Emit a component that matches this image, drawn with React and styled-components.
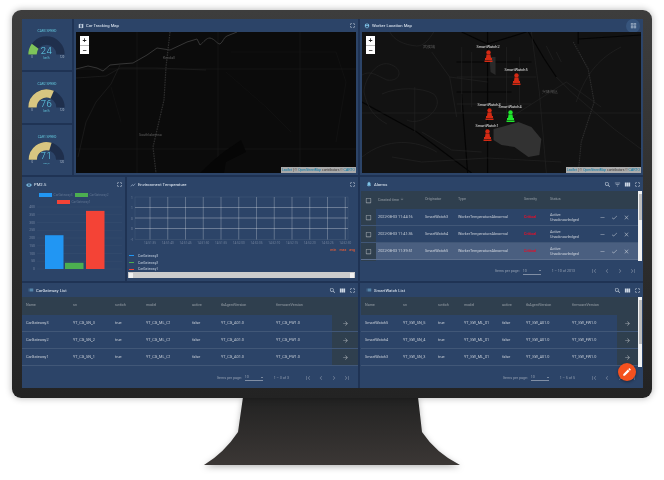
import React from "react";
import styled, { createGlobalStyle } from "styled-components";
import {
  MdMap, MdPersonPin, MdVisibility, MdShowChart, MdNotifications, MdList, MdSearch,
  MdFilterList, MdViewColumn, MdFullscreen, MdArrowForward, MdDone, MdClose, MdRemove,
  MdFirstPage, MdLastPage, MdChevronLeft, MdChevronRight, MdEdit, MdArrowDownward,
  MdCheckBoxOutlineBlank, MdGridView,
} from "react-icons/md";

const GlobalStyle = createGlobalStyle`
  html, body { margin: 0; background: #fff; overflow: hidden; }
  * { box-sizing: border-box; }
  body { font-family: Roboto, "Liberation Sans", sans-serif; }
`;

const Page = styled.div`
  width: 664px;
  height: 480px;
  padding: 10px 0 0 12px;
`;

const Monitor = styled.div`
  position: relative;
  z-index: 1;
  width: 640px;
  height: 388px;
  padding: 9px 9px 10px 10px;
  border-radius: 9px;
  background: linear-gradient(#3d3d3d, #232323);
  box-shadow: 0 0 7px rgba(0, 0, 0, 0.3);
`;

const Screen = styled.div`
  position: relative;
  display: grid;
  grid-template-rows: 156px 104px 105px;
  gap: 2px;
  width: 621px;
  height: 369px;
  background: #1f3354;
  filter: blur(0.4px);
`;

const Row = styled.div`
  display: grid;
  grid-template-columns: ${(p) => p.$cols};
  gap: 2px;
  min-height: 0;
`;

const GaugeColumn = styled.div`
  display: grid;
  grid-template-rows: 51px 51px 50px;
  gap: 2px;
`;

const Panel = styled.section`
  display: flex;
  flex-direction: column;
  min-width: 0;
  min-height: 0;
  background: #2c4468;
  overflow: hidden;
`;

const PanelHead = styled.header`
  display: flex;
  align-items: center;
  flex: none;
  height: ${(p) => p.$h || 14}px;
  padding: 0 2px 0 ${(p) => p.$pad ?? 4}px;
  color: #dfe6ef;
`;

const PanelTitle = styled.span`
  margin-left: 2px;
  flex: 1;
  font-size: 4.2px;
  font-weight: 500;
  color: #cdd7e4;
  white-space: nowrap;
`;

const HeadTools = styled.div`
  display: flex;
  align-items: center;
  gap: 3px;
  color: #cdd7e4;
`;

const MapPane = styled.div`
  position: relative;
  flex: 1;
  margin: 0 2px 2px;
  background: ${(p) => p.$bg};
  overflow: hidden;
`;

const MapArt = styled.svg`
  display: block;
  width: 100%;
  height: 100%;
`;

const ZoomBox = styled.div`
  position: absolute;
  left: 4px;
  top: 4px;
  width: 9px;
  height: 18px;
  display: grid;
  grid-template-rows: 1fr 1fr;
  background: #fff;
  font: 700 7px/9px "Liberation Sans", sans-serif;
  color: #222;
  text-align: center;
  span + span { border-top: 0.5px solid #bbb; }
`;

const Attribution = styled.div`
  position: absolute;
  right: 0;
  bottom: 0;
  height: 6px;
  padding: 0 1px;
  background: rgba(255, 255, 255, 0.65);
  font: 3.3px/6px "Liberation Sans", sans-serif;
  color: #333;
  white-space: nowrap;
  b { font-weight: 400; color: #0078a8; }
`;

const PlaceName = styled.span`
  position: absolute;
  left: ${(p) => p.$x}px;
  top: ${(p) => p.$y}px;
  font-size: 3.6px;
  color: #5d5d5d;
  white-space: nowrap;
`;

const Pin = styled.div`
  position: absolute;
  left: ${(p) => p.$x}px;
  top: ${(p) => p.$y}px;
  display: flex;
  flex-direction: column;
  align-items: center;
  width: 30px;
  margin-left: -15px;
  color: ${(p) => p.$color};
`;

const PinLabel = styled.span`
  font-size: 3.8px;
  line-height: 5px;
  color: #e2e2e2;
  margin-bottom: 1px;
`;

const BarLegend = styled.div`
  display: flex;
  flex-wrap: wrap;
  justify-content: center;
  gap: 2px 2px;
  height: 12px;
  padding: 0 6px;
  flex: none;
`;

const LegendItem = styled.span`
  display: flex;
  align-items: center;
  height: 5px;
  font-size: 3.2px;
  color: #5f7391;
  white-space: nowrap;
  i { width: 13px; height: 4px; margin-right: 2px; background: ${(p) => p.$color}; }
`;

const ChartArt = styled.svg`
  display: block;
  flex: none;
`;

const SeriesKeys = styled.div`
  display: flex;
  justify-content: flex-end;
  gap: 3px;
  height: 6px;
  padding-right: 3px;
  flex: none;
  font-size: 3.6px;
  font-weight: 700;
  line-height: 6px;
  color: #c9593f;
`;

const SeriesList = styled.div`
  display: flex;
  flex-direction: column;
  gap: 1px;
  padding-left: 2px;
  flex: none;
`;

const SeriesRow = styled.div`
  display: flex;
  align-items: center;
  height: 5.7px;
  font-size: 3.4px;
  font-weight: 500;
  color: #a9b7ca;
  i { width: 5px; height: 1px; margin-right: 4px; background: ${(p) => p.$color}; }
`;

const HBar = styled.div`
  display: flex;
  justify-content: space-between;
  align-items: center;
  height: 6px;
  margin: 0 3px 0 1px;
  padding: 0 1px;
  flex: none;
  background: #ccc;
  i { width: 4px; height: 5px; background: #f1f1f1; }
`;

const TableWrap = styled.div`
  display: flex;
  flex: none;
  height: ${(p) => p.$h}px;
  margin: 0 ${(p) => (p.$scroll ? 1 : 0)}px;
  overflow: hidden;
`;

const TableBody = styled.div`
  flex: 1;
  min-width: 0;
`;

const VScroll = styled.div`
  position: relative;
  flex: none;
  width: 4px;
  background: #f1f1f1;
  &::after {
    content: "";
    position: absolute;
    left: 0.5px;
    right: 0.5px;
    top: 3px;
    height: ${(p) => p.$thumb}px;
    background: #bdbdbd;
  }
`;

const TableRow = styled.div`
  display: grid;
  grid-template-columns: ${(p) => p.$cols};
  align-items: center;
  height: ${(p) => (p.$head ? 18 : 17)}px;
  background: ${(p) => (p.$head ? "#2f3f4e" : p.$hl ? "#4a5f80" : "#2c4468")};
  border-bottom: ${(p) => (p.$head ? "none" : "0.5px solid rgba(255,255,255,0.1)")};
  font-size: ${(p) => (p.$head ? 3.7 : 3.8)}px;
  color: ${(p) => (p.$head ? "rgba(255,255,255,0.45)" : "rgba(255,255,255,0.7)")};
`;

const RowStub = styled.div`
  height: 17px;
  background: linear-gradient(90deg, #2f3f4e 15px, #2c4468 15px);
`;

const Cell = styled.div`
  padding-left: ${(p) => p.$pad ?? 4}px;
  white-space: nowrap;
  line-height: 5.5px;
  color: ${(p) => p.$color || "inherit"};
  font-weight: ${(p) => p.$weight || 400};
`;

const StickyCell = styled.div`
  display: flex;
  align-items: center;
  justify-content: center;
  align-self: stretch;
  background: ${(p) => (p.$clear ? "transparent" : "#2f3f4e")};
  color: rgba(255, 255, 255, 0.55);
`;

const RowActions = styled.div`
  display: flex;
  align-items: center;
  gap: 5px;
  padding-left: 3px;
  color: rgba(255, 255, 255, 0.55);
`;

const Pager = styled.footer`
  display: flex;
  align-items: center;
  justify-content: flex-end;
  flex: 1;
  padding-right: ${(p) => p.$right}px;
  font-size: 3.6px;
  color: rgba(255, 255, 255, 0.45);
`;

const PageSize = styled.span`
  display: flex;
  justify-content: space-between;
  align-items: center;
  width: 18px;
  margin: 0 11px 0 3px;
  border-bottom: 0.5px solid rgba(255, 255, 255, 0.4);
  line-height: 6px;
  &::after {
    content: "";
    border: 1.6px solid transparent;
    border-top-color: rgba(255, 255, 255, 0.7);
    border-bottom: 0;
  }
`;

const PagerButtons = styled.div`
  display: grid;
  grid-template-columns: repeat(4, 13px);
  margin-left: 12px;
  justify-items: center;
  color: rgba(255, 255, 255, 0.32);
`;

const Fab = styled.button`
  position: absolute;
  left: 596px;
  top: 344px;
  width: 18px;
  height: 18px;
  display: flex;
  align-items: center;
  justify-content: center;
  padding: 0;
  border: 0;
  border-radius: 50%;
  background: #f4511e;
  color: #fff;
  box-shadow: 0 1px 3px rgba(0, 0, 0, 0.4);
`;

const CornerBadge = styled.span`
  display: flex;
  align-items: center;
  justify-content: center;
  width: 14px;
  height: 14px;
  margin-right: 1px;
  border-radius: 50%;
  background: #37557d;
  color: #a9bacd;
`;

const Stand = styled.svg`
  display: block;
  margin: -1px 0 0 192px;
  filter: drop-shadow(0 2px 3px rgba(0, 0, 0, 0.28));
`;

const GAUGES = [
  { title: "CAR3 SPEED", value: 24, color: "#7ec45a" },
  { title: "CAR2 SPEED", value: 76, color: "#d8c681" },
  { title: "CAR1 SPEED", value: 71, color: "#d8c681" },
];

function arcPath(cx, cy, r, from, to) {
  const pt = (f) => {
    const a = Math.PI * (1 - f);
    return `${(cx + r * Math.cos(a)).toFixed(2)} ${(cy - r * Math.sin(a)).toFixed(2)}`;
  };
  return `M${pt(from)} A${r} ${r} 0 0 1 ${pt(to)}`;
}

function Gauge({ title, value, color }) {
  return (
    <Panel>
      <svg width="50" height="51" viewBox="0 0 50 51">
        <text x="25" y="13" fontSize="3.3" fill="#62c6dc" textAnchor="middle" fontFamily="Roboto">{title}</text>
        <path d={arcPath(24.5, 35.5, 14, 0, 1)} stroke="#1f2f4c" strokeWidth="8.4" fill="none" />
        <path d={arcPath(24.5, 35.5, 14, 0, value / 120)} stroke={color} strokeWidth="8.4" fill="none" />
        <text x="24.5" y="35" fontSize="9.5" fontWeight="300" fill="#62d2ee" textAnchor="middle" fontFamily="Roboto" letterSpacing="0.6">{value}</text>
        <text x="24.5" y="39.5" fontSize="2.6" fill="#62c6dc" textAnchor="middle" fontFamily="Roboto">km/h</text>
        <text x="10" y="39" fontSize="2.8" fill="#aebbcc" textAnchor="middle" fontFamily="Roboto">0</text>
        <text x="40" y="39" fontSize="2.8" fill="#aebbcc" textAnchor="middle" fontFamily="Roboto">120</text>
      </svg>
    </Panel>
  );
}

function CarMap() {
  return (
    <MapPane $bg="#0b0b0b">
      <MapArt viewBox="0 0 280 141" preserveAspectRatio="none">
        <path d="M61 0V141M142 0V141M224 0V141M0 117H280M0 37H280" stroke="#1b1b1b" strokeWidth="0.6" fill="none" />
        <path d="M0 37L12 34L21 36L27 39L34 33L44 32L57 31L71 23L81 16L94 18L111 10L121 7L124 13C128 10 130 6 134 6C139 7 141 12 144 12C147 10 148 5 151 4L161 0" stroke="#363636" strokeWidth="1" fill="none" />
        <path d="M0 46L30 44L44 36L80 36L130 38M44 33L35 52L20 70L10 90L2 125" stroke="#232323" strokeWidth="0.6" fill="none" />
        <path d="M94 0L90 35L88 68L77 115L80 141" stroke="#303030" strokeWidth="1.2" strokeDasharray="1.5 1" fill="none" />
        <path d="M35 55L45 90M150 40L190 75L215 100M155 20H260L270 50L260 110" stroke="#141414" strokeWidth="0.6" fill="none" />
        <path d="M124 141C140 125 150 118 165 108L170 120L150 130L148 141Z" fill="#060606" />
      </MapArt>
      <ZoomBox><span>+</span><span>−</span></ZoomBox>
      <PlaceName $x={87} $y={24}>Kendall</PlaceName>
      <PlaceName $x={63} $y={101}>Southlakemsa</PlaceName>
      <Attribution><b>Leaflet</b> | © <b>OpenStreetMap</b> contributors © <b>CARTO</b></Attribution>
    </MapPane>
  );
}

const BLACK_ROADS = [
  "M126 0V141",
  "M100 0L126 12L165 0",
  "M217 7L280 3M217 0V12",
  "M0 70L55 100L110 141",
  "M95 30H170M95 60H150M100 62L106 141",
  "M167 0L183 27L195 45",
];

const GREY_ROADS = [
  "M0 81H280",
  "M28 0C32 8 42 13 55 14C62 14 67 8 72 0",
  "M0 43C8 38 14 43 25 48C38 50 42 38 30 33C15 26 2 48 2 60C5 75 12 85 25 92",
  "M20 62C35 55 60 55 72 62C85 75 60 95 45 88M53 55V100",
  "M0 125C25 105 55 108 75 120M60 100L90 118L120 120M70 20L88 45L95 85",
  "M88 45L126 50M100 15V80M110 20V75M145 15V85M158 25V75M95 45H175M95 72H170",
  "M195 45L210 60L253 97L280 117",
  "M170 0L178 60L185 141M150 85L205 50L240 75",
  "M260 15C240 25 225 40 215 70",
  "M30 125L60 130L126 126L200 130",
  "M185 14L192 28M195 20L200 30",
];

function Pawn() {
  return (
    <svg width="9" height="12" viewBox="0 0 9 12" fill="currentColor">
      <circle cx="4.5" cy="2.4" r="2.2" />
      <path d="M2.5 4.6H6.5L7 8H8V10H1V8H2ZM0.5 10.6H8.5V12H0.5Z" />
    </svg>
  );
}

const PINS = [
  { name: "SmartWatch2", x: 126, y: 12, color: "#d42a14" },
  { name: "SmartWatch5", x: 154, y: 35, color: "#d42a14" },
  { name: "SmartWatch3", x: 127, y: 70, color: "#d42a14" },
  { name: "SmartWatch4", x: 148, y: 72, color: "#1fe52c" },
  { name: "SmartWatch1", x: 125, y: 91, color: "#d42a14" },
];

function WorkerMap() {
  return (
    <MapPane $bg="#121212">
      <MapArt viewBox="0 0 280 141" preserveAspectRatio="none">
        <path d={BLACK_ROADS.join("")} stroke="#050505" strokeWidth="1.2" fill="none" />
        <path d={GREY_ROADS.join("")} stroke="#252525" strokeWidth="0.6" fill="none" />
        <path d="M212 10L227 37L233 70L220 110L217 141" stroke="#2d2d2d" strokeWidth="1.1" strokeDasharray="1.5 0.8" fill="none" />
        <path d="M132 97L140 95L157 90L170 95L180 107L178 123L167 125L153 115L140 113L132 108Z" fill="#323232" />
        <path d="M128 25H134L134 43L129 40Z" fill="#2a2a2a" />
      </MapArt>
      <ZoomBox><span>+</span><span>−</span></ZoomBox>
      <PlaceName $x={61} $y={13}>武侯城</PlaceName>
      <PlaceName $x={180} $y={58}>兴隆湖区</PlaceName>
      {PINS.map((p) => (
        <Pin key={p.name} $x={p.x} $y={p.y} $color={p.color}>
          <PinLabel>{p.name}</PinLabel>
          <Pawn />
        </Pin>
      ))}
      <Attribution><b>Leaflet</b> | © <b>OpenStreetMap</b> contributors © <b>CARTO</b></Attribution>
    </MapPane>
  );
}

const BARS = [
  { name: "CarGateway3", value: 218, x: 23, color: "#2196f3" },
  { name: "CarGateway2", value: 40, x: 43, color: "#4caf50" },
  { name: "CarGateway1", value: 375, x: 64, color: "#f44336" },
];

function PmPanel() {
  const y = (v) => 65 - v * 0.155;
  return (
    <Panel>
      <PanelHead $h={15}>
        <MdVisibility size={6} color="#7fc4e8" />
        <PanelTitle>PM2.5</PanelTitle>
        <HeadTools><MdFullscreen size={7} /></HeadTools>
      </PanelHead>
      <BarLegend>
        {BARS.map((b) => (
          <LegendItem key={b.name} $color={b.color}><i />{b.name}</LegendItem>
        ))}
      </BarLegend>
      <ChartArt width="103" height="77" viewBox="0 0 103 77">
        {[0, 50, 100, 150, 200, 250, 300, 350, 400].map((v) => (
          <g key={v}>
            <line x1="15" x2="100" y1={y(v)} y2={y(v)} stroke="rgba(255,255,255,0.06)" strokeWidth="0.5" />
            <text x="13" y={y(v) + 1.2} fontSize="3.4" fill="#71829d" textAnchor="end" fontFamily="Roboto">{v}</text>
          </g>
        ))}
        {BARS.map((b) => (
          <rect key={b.name} x={b.x} y={y(b.value)} width="18.5" height={65 - y(b.value)} fill={b.color} />
        ))}
      </ChartArt>
    </Panel>
  );
}

const TICKS = ["14:51:35", "14:51:40", "14:51:45", "14:51:50", "14:51:55", "14:52:00", "14:52:05", "14:52:10", "14:52:15", "14:52:20", "14:52:25", "14:52:30"];

function TempPanel() {
  return (
    <Panel>
      <PanelHead $h={15} $pad={3}>
        <MdShowChart size={6} color="#9fb3cc" />
        <PanelTitle>Environment Temperature</PanelTitle>
        <HeadTools><MdFullscreen size={7} /></HeadTools>
      </PanelHead>
      <ChartArt width="231" height="55" viewBox="0 0 231 55">
        <rect x="8" y="5" width="213" height="42.5" fill="none" stroke="rgba(255,255,255,0.12)" strokeWidth="0.5" />
        {[15.5, 26, 36.5].map((ly) => (
          <line key={ly} x1="8" x2="221" y1={ly} y2={ly} stroke="rgba(255,255,255,0.5)" strokeWidth="0.6" />
        ))}
        {TICKS.map((t, i) => (
          <g key={t}>
            <line x1={23 + i * 17.75} x2={23 + i * 17.75} y1="5" y2="47.5" stroke="rgba(255,255,255,0.42)" strokeWidth="0.6" />
            <text x={23 + i * 17.75} y="52" fontSize="3.1" fill="#71829d" textAnchor="middle" fontFamily="Roboto">{t}</text>
          </g>
        ))}
        {[["1", 6.5], ["1", 17], ["0", 27.5], ["0", 38], ["-1", 48.5]].map(([t, ly], i) => (
          <text key={i} x="5" y={ly} fontSize="3.2" fill="#71829d" textAnchor="middle" fontFamily="Roboto">{t}</text>
        ))}
      </ChartArt>
      <SeriesKeys><span>min</span><span>max</span><span>avg</span></SeriesKeys>
      <SeriesList>
        {BARS.map((b) => (
          <SeriesRow key={b.name} $color={b.color}><i />{b.name}</SeriesRow>
        ))}
      </SeriesList>
      <HBar><i /><i /></HBar>
    </Panel>
  );
}

const ALARM_COLS = "15px 47px 33px 66px 26px 48px 1fr";
const ALARMS = [
  ["2022-08-03 11:44:16", "SmartWatch3"],
  ["2022-08-03 11:41:36", "SmartWatch4"],
  ["2022-08-03 11:39:51", "SmartWatch5"],
];

function Pagination({ range, right }) {
  return (
    <Pager $right={right}>
      Items per page:
      <PageSize>10</PageSize>
      {range}
      <PagerButtons>
        <MdFirstPage size={8} />
        <MdChevronLeft size={8} />
        <MdChevronRight size={8} />
        <MdLastPage size={8} />
      </PagerButtons>
    </Pager>
  );
}

function AlarmsPanel() {
  return (
    <Panel>
      <PanelHead $pad={6}>
        <MdNotifications size={6} color="#7fc4e8" />
        <PanelTitle>Alarms</PanelTitle>
        <HeadTools>
          <MdSearch size={7} />
          <MdFilterList size={7} />
          <MdViewColumn size={7} />
          <MdFullscreen size={7} />
        </HeadTools>
      </PanelHead>
      <TableWrap $h={70} $scroll>
        <TableBody>
          <TableRow $head $cols={ALARM_COLS}>
            <StickyCell $clear><MdCheckBoxOutlineBlank size={7} /></StickyCell>
            <Cell $pad={2}>Created time <MdArrowDownward size={4} /></Cell>
            <Cell $pad={2}>Originator</Cell>
            <Cell $pad={2}>Type</Cell>
            <Cell $pad={2}>Severity</Cell>
            <Cell $pad={2}>Status</Cell>
            <Cell />
          </TableRow>
          {ALARMS.map(([time, origin], i) => (
            <TableRow key={time} $cols={ALARM_COLS} $hl={i === 2}>
              <StickyCell><MdCheckBoxOutlineBlank size={7} /></StickyCell>
              <Cell $pad={2}>{time}</Cell>
              <Cell $pad={2}>{origin}</Cell>
              <Cell $pad={2}>WorkerTemperatureAbnormal</Cell>
              <Cell $pad={2} $color="#e0112b" $weight={700}>Critical</Cell>
              <Cell $pad={2}>Active<br />Unacknowledged</Cell>
              <RowActions><MdRemove size={7} /><MdDone size={7} /><MdClose size={7} /></RowActions>
            </TableRow>
          ))}
          <RowStub />
        </TableBody>
        <VScroll $thumb={26} />
      </TableWrap>
      <Pagination range="1 – 10 of 2013" right={4} />
    </Panel>
  );
}

const LIST_HEAD = ["Name", "sn", "switch", "model", "active", "tbAgentVersion", "firmwareVersion"];
const GATEWAY_COLS = "47px 42px 31px 46px 29px 55px 60px 26px";
const WATCH_COLS = "38px 35px 26px 38px 24px 46px 49px 21px";

const GATEWAYS = [3, 2, 1].map((n) => [`CarGateway${n}`, `YT_CG_SN_${n}`, "true", "YT_CG_ML_C1", "false", "YT_CG_A01.0", "YT_CG_FW1.0"]);
const WATCHES = [5, 4, 3].map((n) => [`SmartWatch${n}`, `YT_SW_SN_${n}`, "true", "YT_SW_ML_X1", "false", "YT_SW_A01.0", "YT_SW_FW1.0"]);

function ListPanel({ title, cols, rows, range, scroll, right }) {
  return (
    <Panel>
      <PanelHead $pad={6}>
        <MdList size={6} color="#7fc4e8" />
        <PanelTitle>{title}</PanelTitle>
        <HeadTools>
          <MdSearch size={7} />
          <MdViewColumn size={7} />
          <MdFullscreen size={7} />
        </HeadTools>
      </PanelHead>
      <TableWrap $h={70} $scroll={scroll}>
        <TableBody>
          <TableRow $head $cols={cols}>
            {LIST_HEAD.map((h) => <Cell key={h}>{h}</Cell>)}
            <Cell />
          </TableRow>
          {rows.map((r) => (
            <TableRow key={r[0]} $cols={cols}>
              {r.map((c, i) => <Cell key={i}>{c}</Cell>)}
              <StickyCell><MdArrowForward size={7} /></StickyCell>
            </TableRow>
          ))}
        </TableBody>
        {scroll && <VScroll $thumb={44} />}
      </TableWrap>
      <Pagination range={range} right={right} />
    </Panel>
  );
}

export default function App() {
  return (
    <Page>
      <GlobalStyle />
      <Monitor>
        <Screen>
          <Row $cols="50px 284px 283px">
            <GaugeColumn>
              {GAUGES.map((g) => <Gauge key={g.title} {...g} />)}
            </GaugeColumn>
            <Panel>
              <PanelHead $h={13}>
                <MdMap size={6} color="#c5d2e2" />
                <PanelTitle>Car Tracking Map</PanelTitle>
                <HeadTools><MdFullscreen size={7} /></HeadTools>
              </PanelHead>
              <CarMap />
            </Panel>
            <Panel>
              <PanelHead $h={13}>
                <MdPersonPin size={6} color="#7fc4e8" />
                <PanelTitle>Worker Location Map</PanelTitle>
                <CornerBadge><MdGridView size={7} /></CornerBadge>
              </PanelHead>
              <WorkerMap />
            </Panel>
          </Row>
          <Row $cols="103px 231px 283px">
            <PmPanel />
            <TempPanel />
            <AlarmsPanel />
          </Row>
          <Row $cols="336px 283px">
            <ListPanel title="CarGateway List" cols={GATEWAY_COLS} rows={GATEWAYS} range="1 – 3 of 3" right={5} />
            <ListPanel title="SmartWatch List" cols={WATCH_COLS} rows={WATCHES} range="1 – 5 of 5" right={4} scroll />
          </Row>
          <Fab><MdEdit size={10} /></Fab>
        </Screen>
      </Monitor>
      <Stand width="256" height="68" viewBox="0 0 256 68">
        <defs>
          <linearGradient id="standFill" x1="0" y1="0" x2="0" y2="1">
            <stop offset="0" stopColor="#222" />
            <stop offset="1" stopColor="#3b3735" />
          </linearGradient>
        </defs>
        <path d="M39 0L34 35Q20 56 0 68H256Q232 56 218 35L214 0Z" fill="url(#standFill)" />
      </Stand>
    </Page>
  );
}
